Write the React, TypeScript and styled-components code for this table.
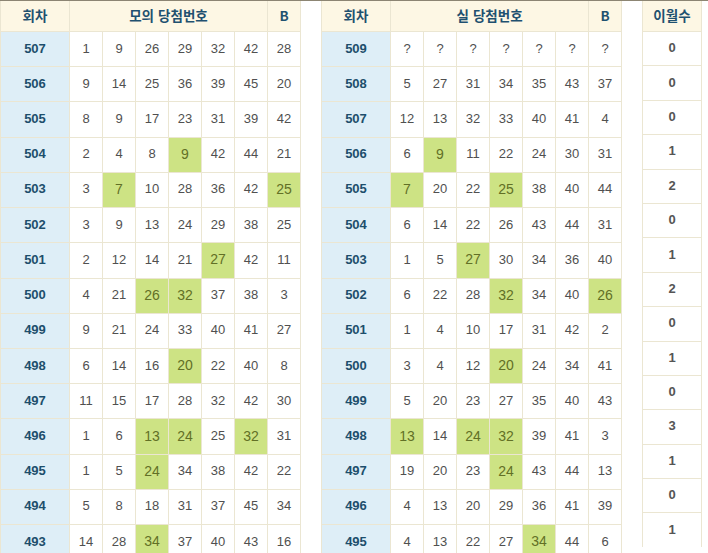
import { Fragment } from 'react'
import styled, { createGlobalStyle } from 'styled-components'

type Row = { round: number; nums: (number | string)[]; hits: number[] }

// hits = column indexes (0..6) that are shaded green
const mock: Row[] = [
  { round: 507, nums: [1, 9, 26, 29, 32, 42, 28], hits: [] },
  { round: 506, nums: [9, 14, 25, 36, 39, 45, 20], hits: [] },
  { round: 505, nums: [8, 9, 17, 23, 31, 39, 42], hits: [] },
  { round: 504, nums: [2, 4, 8, 9, 42, 44, 21], hits: [3] },
  { round: 503, nums: [3, 7, 10, 28, 36, 42, 25], hits: [1, 6] },
  { round: 502, nums: [3, 9, 13, 24, 29, 38, 25], hits: [] },
  { round: 501, nums: [2, 12, 14, 21, 27, 42, 11], hits: [4] },
  { round: 500, nums: [4, 21, 26, 32, 37, 38, 3], hits: [2, 3] },
  { round: 499, nums: [9, 21, 24, 33, 40, 41, 27], hits: [] },
  { round: 498, nums: [6, 14, 16, 20, 22, 40, 8], hits: [3] },
  { round: 497, nums: [11, 15, 17, 28, 32, 42, 30], hits: [] },
  { round: 496, nums: [1, 6, 13, 24, 25, 32, 31], hits: [2, 3, 5] },
  { round: 495, nums: [1, 5, 24, 34, 38, 42, 22], hits: [2] },
  { round: 494, nums: [5, 8, 18, 31, 37, 45, 34], hits: [] },
  { round: 493, nums: [14, 28, 34, 37, 40, 43, 16], hits: [2] },
]

const real: Row[] = [
  { round: 509, nums: ['?', '?', '?', '?', '?', '?', '?'], hits: [] },
  { round: 508, nums: [5, 27, 31, 34, 35, 43, 37], hits: [] },
  { round: 507, nums: [12, 13, 32, 33, 40, 41, 4], hits: [] },
  { round: 506, nums: [6, 9, 11, 22, 24, 30, 31], hits: [1] },
  { round: 505, nums: [7, 20, 22, 25, 38, 40, 44], hits: [0, 3] },
  { round: 504, nums: [6, 14, 22, 26, 43, 44, 31], hits: [] },
  { round: 503, nums: [1, 5, 27, 30, 34, 36, 40], hits: [2] },
  { round: 502, nums: [6, 22, 28, 32, 34, 40, 26], hits: [3, 6] },
  { round: 501, nums: [1, 4, 10, 17, 31, 42, 2], hits: [] },
  { round: 500, nums: [3, 4, 12, 20, 24, 34, 41], hits: [3] },
  { round: 499, nums: [5, 20, 23, 27, 35, 40, 43], hits: [] },
  { round: 498, nums: [13, 14, 24, 32, 39, 41, 3], hits: [0, 2, 3] },
  { round: 497, nums: [19, 20, 23, 24, 43, 44, 13], hits: [3] },
  { round: 496, nums: [4, 13, 20, 29, 36, 41, 39], hits: [] },
  { round: 495, nums: [4, 13, 22, 27, 34, 44, 6], hits: [4] },
]

const carry = [0, 0, 0, 1, 2, 0, 1, 2, 0, 1, 0, 3, 1, 0, 1]

function App() {
  return (
    <>
      <GlobalStyle />
      <Wrap>
        <NumberBoard title='모의 당첨번호' rows={mock} />
        <NumberBoard title='실 당첨번호' rows={real} />
        <CarryBoard>
          <HeadCell>이월수</HeadCell>
          {carry.map((c, i) => (
            <CarryCell key={i}>{c}</CarryCell>
          ))}
        </CarryBoard>
      </Wrap>
    </>
  )
}

function NumberBoard({ title, rows }: { title: string; rows: Row[] }) {
  return (
    <Board>
      <HeadCell>회차</HeadCell>
      <HeadCell $span={6}>{title}</HeadCell>
      <HeadCell>B</HeadCell>
      {rows.map((r) => (
        <Fragment key={r.round}>
          <RoundCell>{r.round}</RoundCell>
          {r.nums.map((n, i) => (
            <NumCell key={i} $hit={r.hits.includes(i)}>
              {n}
            </NumCell>
          ))}
        </Fragment>
      ))}
    </Board>
  )
}

const GlobalStyle = createGlobalStyle`
  html, body {
    margin: 0;
    padding: 0;
    overflow: hidden;
    background: #fff;
  }
`
const Wrap = styled.div`
  display: flex;
  align-items: flex-start;
  gap: 20px;
  border-top: 1px solid #8c8573;
`
const Board = styled.div`
  display: grid;
  grid-template-columns: 68px repeat(7, 32px);
  grid-template-rows: 30px;
  grid-auto-rows: 34.23px;
  gap: 1px;
  padding: 0 1px;
  background: #ebe6d2;
`
const CarryBoard = styled(Board)`
  grid-template-columns: 58px;
  grid-auto-rows: 33.4px;
`
const Cell = styled.div`
  display: flex;
  align-items: center;
  justify-content: center;
  padding-bottom: 2px;
  font-family: 'Liberation Sans', sans-serif;
  font-size: 13px;
`
const HeadCell = styled(Cell)<{ $span?: number }>`
  grid-column: span ${({ $span }) => $span || 1};
  background: #fdf7e4;
  color: #1f5170;
  font-family: 'Noto Sans CJK KR', 'Liberation Sans', sans-serif;
  font-weight: 700;
  font-size: 13.5px;
  word-spacing: 1px;
`
const RoundCell = styled(Cell)`
  background: #deeef7;
  color: #1d4e6c;
  font-weight: 700;
`
const NumCell = styled(Cell)<{ $hit: boolean }>`
  background: ${({ $hit }) => ($hit ? '#cde384' : '#fff')};
  color: ${({ $hit }) => ($hit ? '#627026' : '#505050')};
  font-size: ${({ $hit }) => ($hit ? '14px' : '13px')};
`
const CarryCell = styled(Cell)`
  background: #fff;
  color: #555;
  font-weight: 700;
`
export default App
